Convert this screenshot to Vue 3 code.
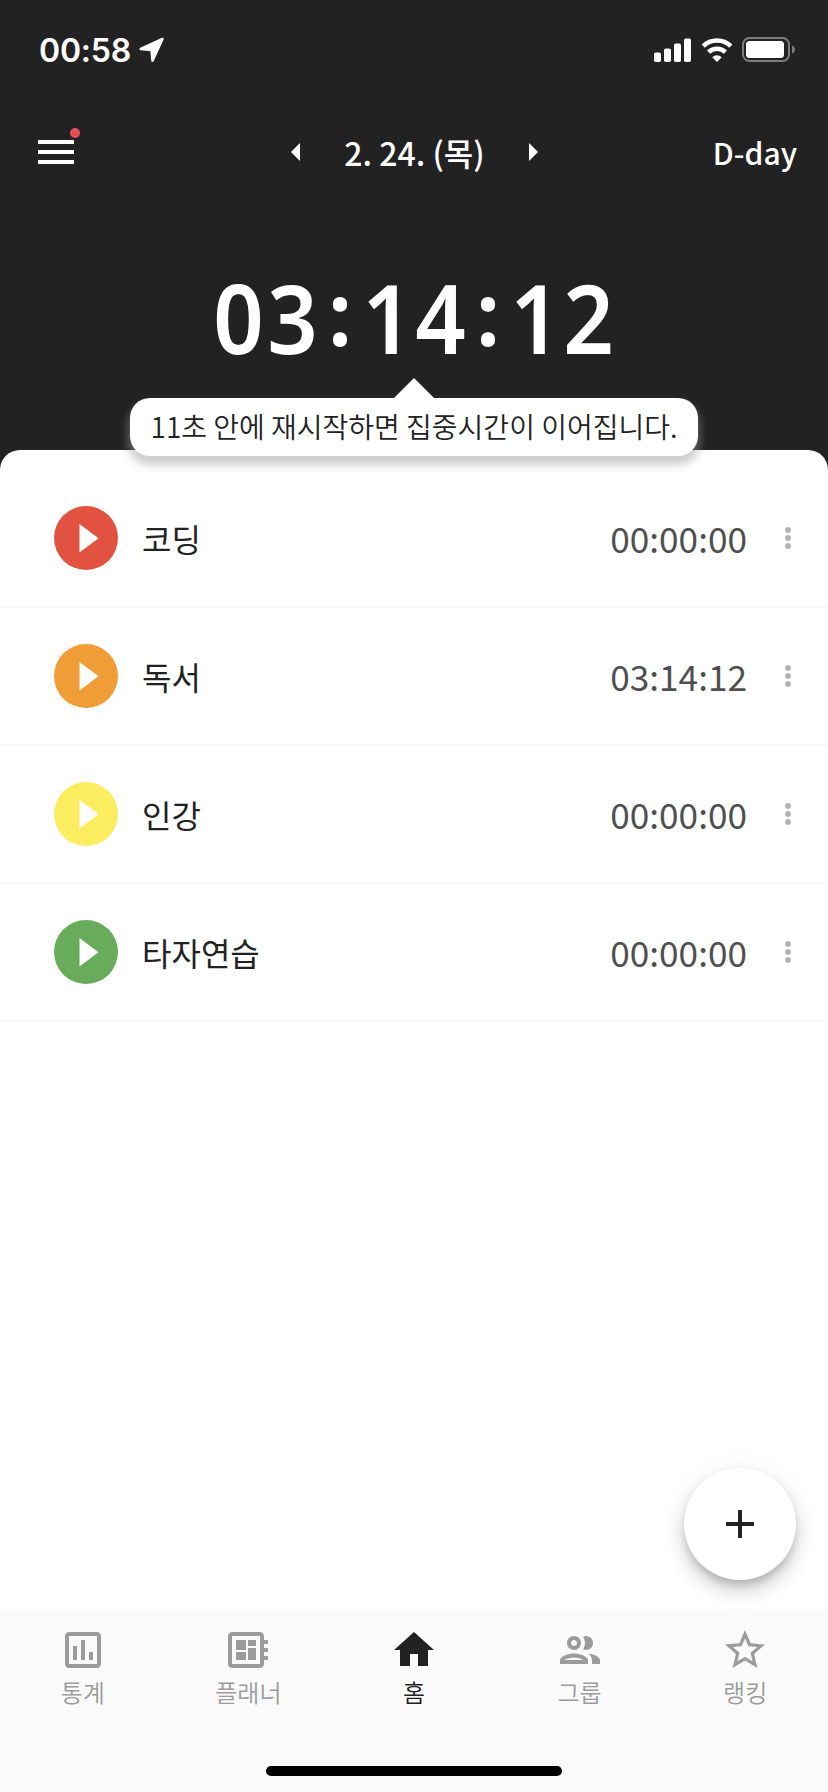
<template>
  <div class="app">
    <header class="top">
      <div class="status-bar">
        <span class="clock">00:58</span>
        <svg class="location" viewBox="0 0 26 26">
          <path d="M23.500 2 1.700 12 12.500 12.900 13.500 23.800Z" />
        </svg>
        <svg class="signal" viewBox="0 0 38 24">
          <rect x="0" y="14.500" width="7" height="9.500" rx="1.800" />
          <rect x="10" y="10.500" width="7" height="13.500" rx="1.800" />
          <rect x="20" y="5.500" width="7" height="18.500" rx="1.800" />
          <rect x="30" y="0.500" width="7" height="23.500" rx="1.800" />
        </svg>
        <svg class="wifi" viewBox="0 0 32 24">
          <path d="M2.200 8.200a19.700 19.700 0 0 1 27.600 0" />
          <path d="M7.600 14.200a12 12 0 0 1 16.800 0" />
          <path class="wifi-dot" d="M16 24 11.300 19.200a6.800 6.800 0 0 1 9.400 0Z" />
        </svg>
        <svg class="battery" viewBox="0 0 54 26">
          <rect class="battery-case" x="1" y="1" width="46" height="23" rx="6.500" />
          <rect x="4" y="4" width="38" height="17" rx="3.500" />
          <path class="battery-cap" d="M50 8.500c4 1.500 4 6.500 0 8Z" />
        </svg>
      </div>

      <div class="toolbar">
        <button class="menu" aria-label="메뉴">
          <svg viewBox="0 0 24 24"><path d="M3 6h18v2H3zM3 11h18v2H3zM3 16h18v2H3z" /></svg>
          <span class="badge" />
        </button>
        <div class="date-nav">
          <button aria-label="이전"><svg viewBox="0 0 9 18"><path d="M9 0v18L0 9z" /></svg></button>
          <span class="date">2. 24. (목)</span>
          <button aria-label="다음"><svg viewBox="0 0 9 18"><path d="M0 0v18l9-9z" /></svg></button>
        </div>
        <span class="dday">D-day</span>
      </div>

      <div class="total">
        <span
          v-for="(char, index) in total"
          :key="index"
          :class="['total-char', { colon: char === ':' }]"
        >{{ char }}</span>
      </div>
      <div class="tooltip">11초 안에 재시작하면 집중시간이 이어집니다.</div>
    </header>

    <main class="content">
      <ul class="subjects">
        <li v-for="subject in subjects" :key="subject.name" class="subject">
          <button class="play" :style="{ background: subject.color }" aria-label="시작">
            <svg viewBox="0 0 64 64"><path d="M25.500 18v28.500L44.500 32.200z" /></svg>
          </button>
          <span class="name">{{ subject.name }}</span>
          <span class="time">{{ subject.time }}</span>
          <svg class="more" viewBox="0 0 32 32">
            <circle cx="16" cy="8" r="2.900" />
            <circle cx="16" cy="16" r="2.900" />
            <circle cx="16" cy="24" r="2.900" />
          </svg>
        </li>
      </ul>
      <button class="add" aria-label="추가">
        <svg viewBox="0 0 28 28"><path d="M12 0h4v12h12v4H16v12h-4V16H0v-4h12z" /></svg>
      </button>
    </main>

    <nav class="tabs">
      <div class="tab-list">
        <a v-for="tab in tabs" :key="tab.label" :class="['tab', { active: tab.active }]">
          <svg viewBox="0 0 24 24"><path :d="tab.icon" /></svg>
          <span>{{ tab.label }}</span>
        </a>
      </div>
      <div class="home-indicator" />
    </nav>
  </div>
</template>

<script setup>
import { ref } from 'vue'

/** 오늘 총 집중시간 */
const total = ref('03:14:12')

/** 과목 목록 */
const subjects = [
  { name: '코딩', time: '00:00:00', color: '#e15241' },
  { name: '독서', time: '03:14:12', color: '#f09d37' },
  { name: '인강', time: '00:00:00', color: '#fbec60' },
  { name: '타자연습', time: '00:00:00', color: '#67ab5b' },
]

/** 하단 탭 */
const tabs = [
  {
    label: '통계',
    icon: 'M19 3H5c-1.100 0-2 .9-2 2v14c0 1.100.9 2 2 2h14c1.100 0 2-.9 2-2V5c0-1.100-.9-2-2-2zm0 16H5V5h14v14zM7 10h2v7H7zm4-3h2v10h-2zm4 6h2v4h-2z',
  },
  {
    label: '플래너',
    icon: 'M22 9V7h-2V5c0-1.100-.9-2-2-2H4c-1.100 0-2 .9-2 2v14c0 1.100.9 2 2 2h14c1.100 0 2-.9 2-2v-2h2v-2h-2v-2h2v-2h-2V9h2zm-4 10H4V5h14v14zM6 13h5v4H6zm6-6h4v3h-4zM6 7h5v5H6zm6 4h4v6h-4z',
  },
  { label: '홈', icon: 'M10 20v-6h4v6h5v-8h3L12 3 2 12h3v8z', active: true },
  {
    label: '그룹',
    icon: 'M9 13.750c-2.340 0-7 1.170-7 3.500V19h14v-1.750c0-2.330-4.660-3.500-7-3.500zM4.340 17c.84-.58 2.870-1.250 4.660-1.250s3.820.67 4.660 1.250H4.340zM9 12c1.930 0 3.500-1.570 3.500-3.500S10.930 5 9 5 5.500 6.570 5.500 8.500 7.070 12 9 12zm0-5c.83 0 1.500.67 1.500 1.500S9.830 10 9 10s-1.500-.67-1.500-1.500S8.170 7 9 7zm7.040 6.810c1.160.84 1.960 1.960 1.960 3.440V19h4v-1.750c0-2.020-3.500-3.170-5.960-3.440zM15 12c1.930 0 3.500-1.570 3.500-3.500S16.930 5 15 5c-.54 0-1.040.13-1.500.35.63.89 1 1.980 1 3.150s-.37 2.260-1 3.150c.46.22.96.35 1.500.35z',
  },
  {
    label: '랭킹',
    icon: 'M22 9.240l-7.190-.62L12 2 9.190 8.630 2 9.240l5.460 4.730L5.820 21 12 17.270 18.180 21l-1.630-7.030L22 9.240zM12 15.400l-3.760 2.270 1-4.280-3.320-2.880 4.380-.38L12 6.100l1.710 4.040 4.380.38-3.320 2.880 1 4.280L12 15.400z',
  },
]
</script>

<style>
body {
  background: #222;
}
</style>

<style scoped>
.app {
  display: flex;
  flex-direction: column;
  width: 828px;
  height: 1792px;
  overflow: hidden;
  background: #222;
  font-family: 'Noto Sans CJK KR', sans-serif;
  color: #222;
}

button {
  padding: 0;
  border: none;
  background: none;
}

svg {
  display: block;
  fill: currentColor;
}

.top {
  position: relative;
  display: flex;
  flex-direction: column;
  height: 450px;
  color: #fff;
}

.status-bar {
  display: flex;
  align-items: center;
  height: 100px;
  padding: 0 32px 0 39px;
}

.clock {
  font-family: Inter, sans-serif;
  font-size: 32px;
  font-weight: 600;
  letter-spacing: -0.2px;
}

.location {
  width: 26px;
  height: 26px;
  margin-left: 8px;
  stroke: #fff;
  stroke-width: 2.5;
  stroke-linejoin: round;
}

.signal {
  width: 38px;
  height: 24px;
  margin-left: auto;
}

.wifi {
  width: 32px;
  height: 24px;
  margin-left: 9px;
  fill: none;
  stroke: #fff;
  stroke-width: 4.6;
}

.wifi-dot {
  fill: #fff;
  stroke: none;
}

.battery {
  width: 54px;
  height: 26px;
  margin-left: 9px;
}

.battery-case {
  fill: none;
  stroke: #7d7d7d;
  stroke-width: 2;
}

.battery-cap {
  fill: #7d7d7d;
}

.toolbar {
  display: grid;
  grid-template-columns: 1fr auto 1fr;
  align-items: center;
  height: 104px;
  padding: 0 31px 0 32px;
  font-size: 32px;
  font-weight: 500;
  line-height: 48px;
}

.menu {
  position: relative;
  width: 48px;
  height: 48px;
  color: #fff;
}

.badge {
  position: absolute;
  top: 0;
  right: 0;
  width: 6px;
  height: 6px;
  border: 2px solid #ec4c74;
  border-radius: 50%;
  background: #e15241;
}

.date-nav {
  display: flex;
  align-items: center;
  gap: 44px;
}

.date-nav button {
  color: #fff;
}

.date-nav svg {
  width: 9px;
  height: 18px;
}

.dday {
  justify-self: end;
  font-size: 30px;
}

.total {
  display: flex;
  justify-content: center;
  margin-top: 48px;
  font-family: 'Noto Sans', sans-serif;
  font-size: 95px;
  font-weight: 600;
  line-height: 130px;
}

.total-char {
  display: flex;
  justify-content: center;
  width: 53.2px;
  transform: scaleX(0.93);
}

.colon {
  width: 42px;
  padding-bottom: 6px;
  font-size: 88px;
  font-weight: 700;
  line-height: 120px;
}

.tooltip {
  position: absolute;
  z-index: 1;
  top: 398px;
  left: 130px;
  box-sizing: border-box;
  width: 568px;
  height: 58px;
  border-radius: 20px;
  background: #fff;
  box-shadow: 0 7px 8px 2px rgba(158, 158, 158, 0.5);
  color: #222;
  font-size: 28px;
  font-weight: 350;
  line-height: 56px;
  text-align: center;
  white-space: nowrap;
}

.tooltip::before {
  content: '';
  position: absolute;
  bottom: 100%;
  left: 264px;
  border: 20px solid transparent;
  border-top: none;
  border-bottom-color: #fff;
}

.content {
  position: relative;
  flex: 1;
  border-radius: 20px 20px 0 0;
  background: #fff;
}

.subjects {
  margin: 0;
  padding: 20px 0 0;
  list-style: none;
}

.subject {
  display: flex;
  align-items: center;
  height: 136px;
  padding: 0 24px 0 54px;
  border-bottom: 2px solid #f8f8f8;
}

.play {
  width: 64px;
  height: 64px;
  border-radius: 50%;
  color: #fff;
}

.name {
  margin-left: 24px;
  font-size: 32px;
  font-weight: 400;
}

.time {
  margin-left: auto;
  padding-bottom: 2px;
  font-size: 35.2px;
  color: #4f4f4f;
}

.more {
  width: 32px;
  height: 32px;
  margin-left: 25px;
  color: #b3b3b3;
}

.add {
  position: absolute;
  right: 32px;
  bottom: 31px;
  display: grid;
  place-items: center;
  width: 112px;
  height: 112px;
  border-radius: 50%;
  background: #fff;
  box-shadow: 0 6px 10px -2px rgba(0, 0, 0, 0.2), 0 12px 20px rgba(0, 0, 0, 0.14), 0 2px 30px rgba(0, 0, 0, 0.06);
  color: #222;
}

.add svg {
  width: 28px;
  height: 28px;
}

.tabs {
  display: flex;
  flex-direction: column;
  justify-content: space-between;
  align-items: center;
  height: 181px;
  background: #fafafa;
  box-shadow: 0 0 4px rgba(0, 0, 0, 0.06);
  z-index: 1;
}

.tab-list {
  display: grid;
  grid-template-columns: repeat(5, 1fr);
  width: 100%;
  padding-top: 15px;
}

.tab {
  display: flex;
  flex-direction: column;
  align-items: center;
  color: #9b9b9b;
  font-size: 24px;
  font-weight: 350;
  line-height: 36px;
}

.tab svg {
  width: 48px;
  height: 48px;
}

.tab.active {
  color: #222;
}

.home-indicator {
  width: 296px;
  height: 10px;
  margin-bottom: 16px;
  border-radius: 5px;
  background: #000;
}
</style>
